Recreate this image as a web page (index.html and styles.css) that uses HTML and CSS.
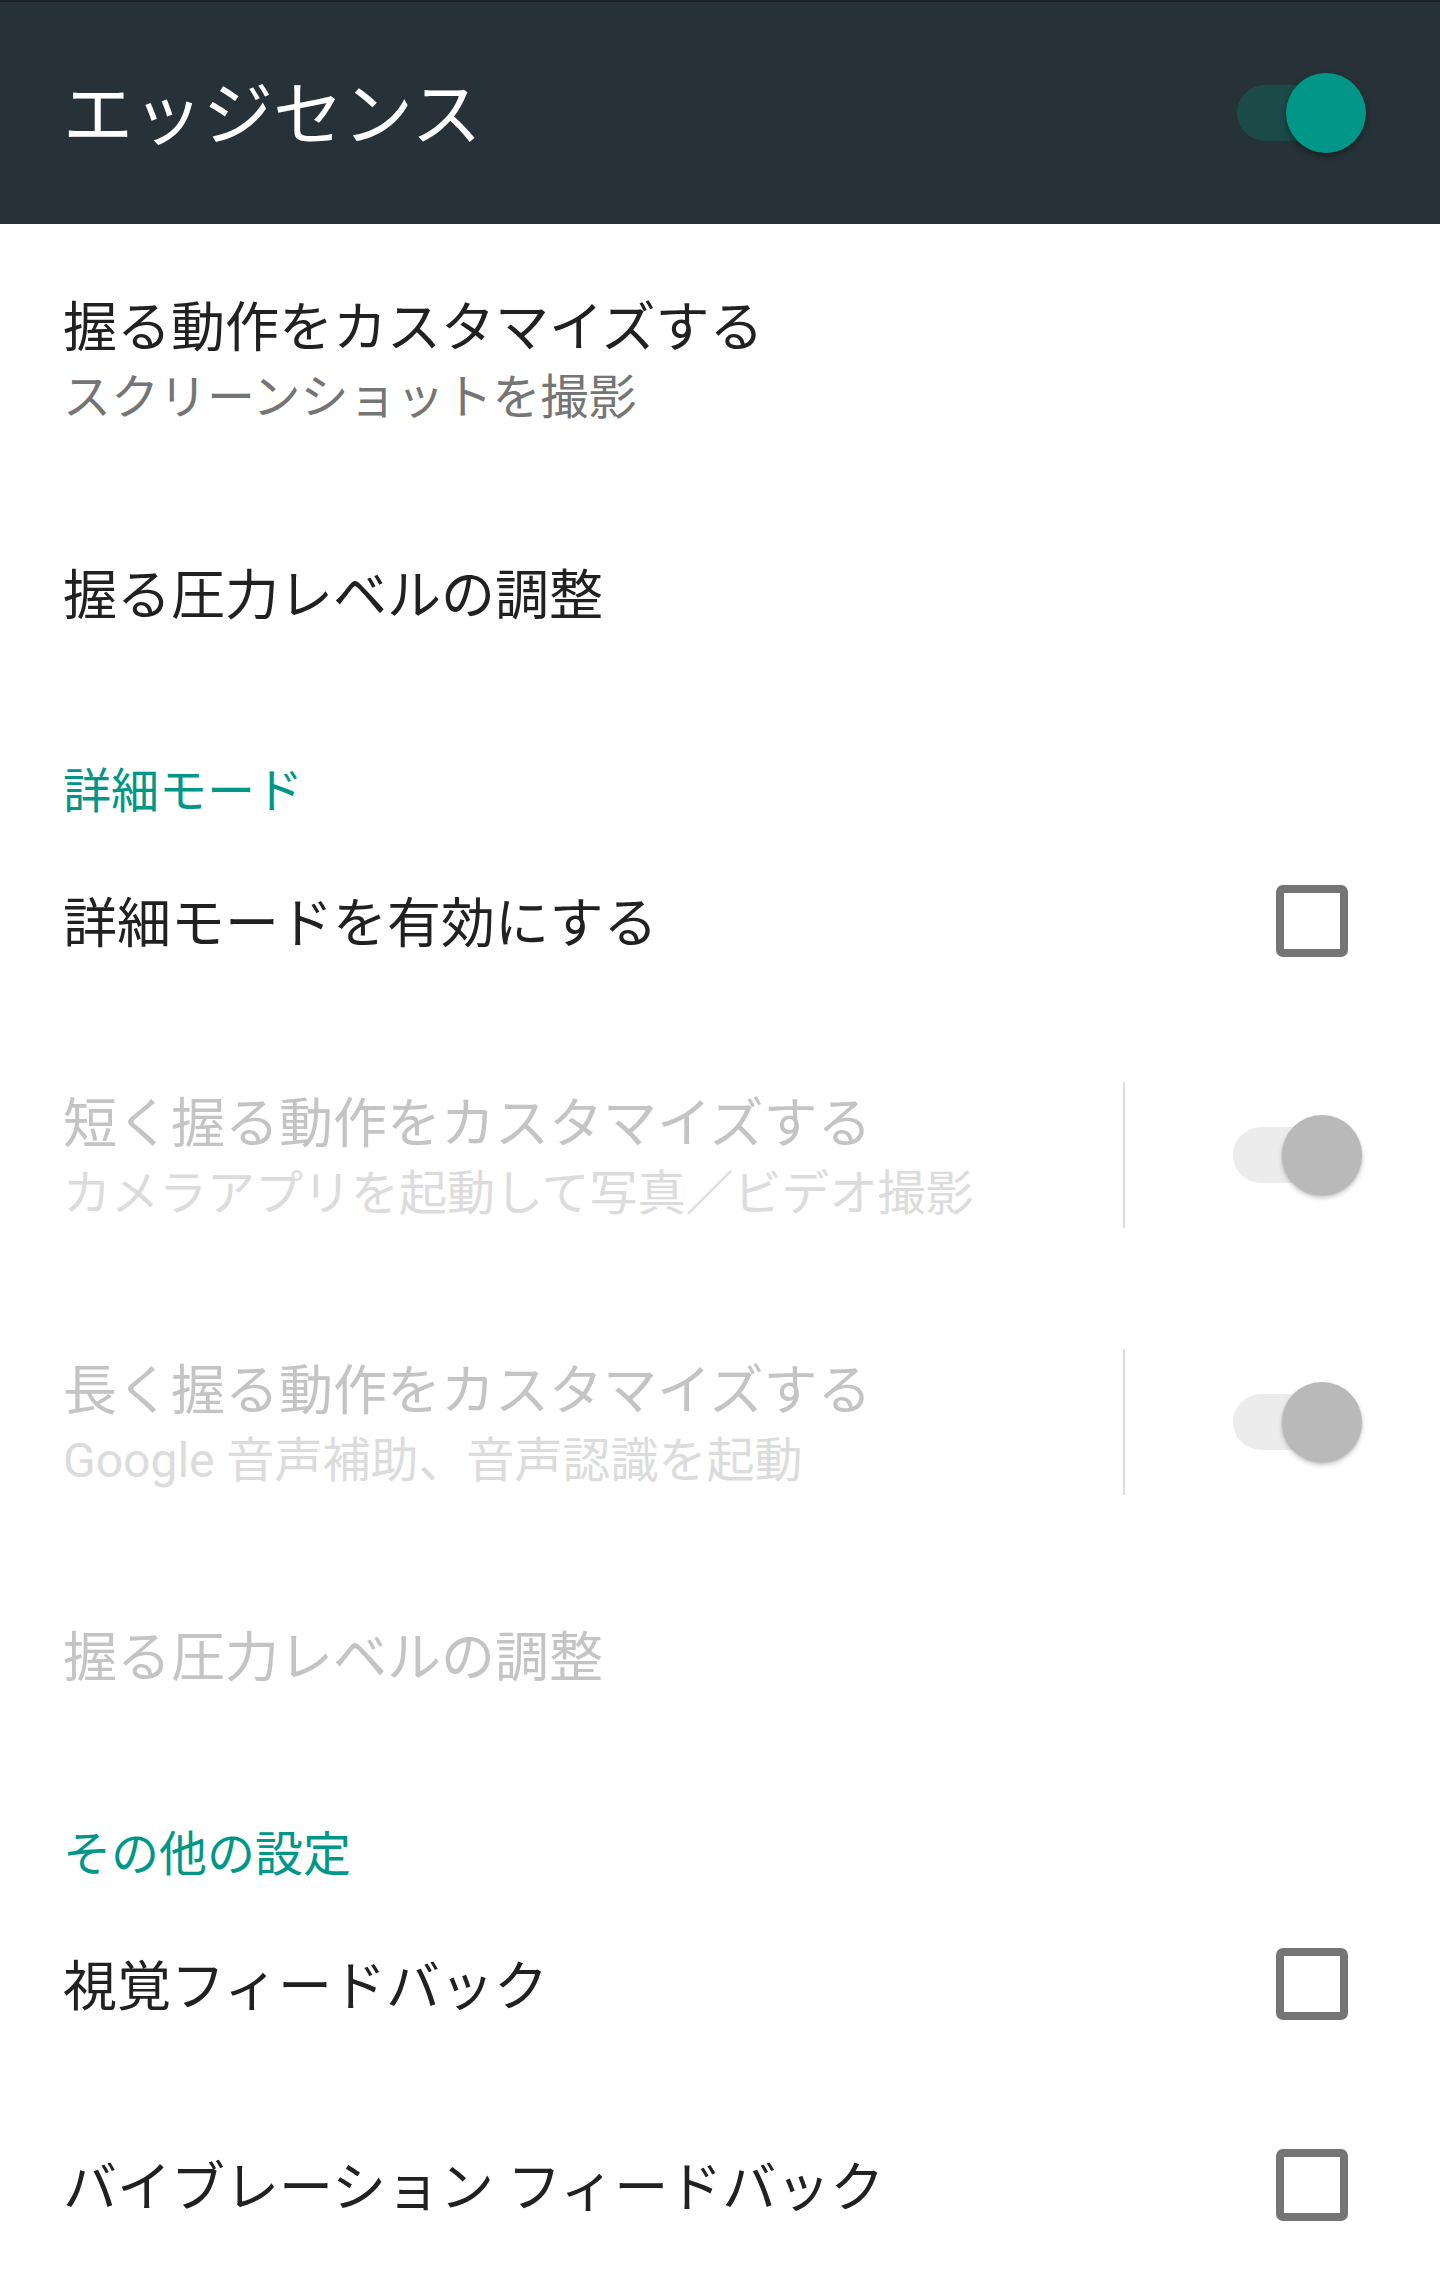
FILE: index.html
```html
<!DOCTYPE html>
<html lang="ja">
    <head>
        <meta charset="UTF-8">
        <meta name="viewport" content="width=device-width, initial-scale=1.0">
        <title>エッジセンス</title>
        <link rel="stylesheet" href="styles.css">
    </head>
<body>
    <header class="appbar">
        <h1 class="appbar-title">エッジセンス</h1>
        <span class="switch switch-on">
            <span class="switch-track"></span>
            <span class="switch-thumb"></span>
        </span>
    </header>

    <main class="prefs">
        <div class="pref pref-two">
            <div class="pref-text">
                <div class="pref-title">握る動作をカスタマイズする</div>
                <div class="pref-summary">スクリーンショットを撮影</div>
            </div>
        </div>

        <div class="pref">
            <div class="pref-text">
                <div class="pref-title">握る圧力レベルの調整</div>
            </div>
        </div>

        <div class="category">詳細モード</div>

        <div class="pref">
            <div class="pref-text">
                <div class="pref-title">詳細モードを有効にする</div>
            </div>
            <span class="checkbox"></span>
        </div>

        <div class="pref pref-two disabled">
            <div class="pref-text">
                <div class="pref-title">短く握る動作をカスタマイズする</div>
                <div class="pref-summary">カメラアプリを起動して写真／ビデオ撮影</div>
            </div>
            <span class="divider"></span>
            <span class="switch">
                <span class="switch-track"></span>
                <span class="switch-thumb"></span>
            </span>
        </div>

        <div class="pref pref-two disabled">
            <div class="pref-text">
                <div class="pref-title">長く握る動作をカスタマイズする</div>
                <div class="pref-summary">Google 音声補助、音声認識を起動</div>
            </div>
            <span class="divider"></span>
            <span class="switch">
                <span class="switch-track"></span>
                <span class="switch-thumb"></span>
            </span>
        </div>

        <div class="pref disabled">
            <div class="pref-text">
                <div class="pref-title">握る圧力レベルの調整</div>
            </div>
        </div>

        <div class="category category-low">その他の設定</div>

        <div class="pref">
            <div class="pref-text">
                <div class="pref-title">視覚フィードバック</div>
            </div>
            <span class="checkbox"></span>
        </div>

        <div class="pref">
            <div class="pref-text">
                <div class="pref-title">バイブレーション フィードバック</div>
            </div>
            <span class="checkbox"></span>
        </div>
    </main>
</body>
</html>
```

FILE: styles.css
```css
body {
    margin: 0;
    padding: 0;
    background-color: #ffffff;
    font-family: Roboto, 'Noto Sans CJK JP', sans-serif;
    overflow: hidden;
}

/* top bar */
.appbar {
    display: flex;
    align-items: center;
    justify-content: space-between;
    height: 222px;
    border-top: 2px solid #1c2023;
    background-color: #263238;
    padding: 0 74px 0 63px;
}

.appbar-title {
    margin: 0;
    padding-top: 6px;
    color: #ffffff;
    font-size: 70px;
    font-weight: normal;
    line-height: 80px;
}

/* switches */
.switch {
    display: flex;
    align-items: center;
}

.switch-track {
    width: 125px;
    height: 56px;
    border-radius: 28px;
    background-color: #ececec;
}

.switch-thumb {
    width: 80px;
    height: 80px;
    margin-left: -76px;
    border-radius: 50%;
    background-color: #b9b9b9;
    box-shadow: 0 3px 5px rgba(0, 0, 0, 0.22), 0 1px 2px rgba(0, 0, 0, 0.12);
}

.switch-on .switch-track {
    background-color: #1c4a48;
}

.switch-on .switch-thumb {
    background-color: #009688;
    box-shadow: 0 3px 6px rgba(0, 0, 0, 0.4);
}

/* preference list */
.pref {
    display: flex;
    align-items: center;
    height: 200px;
    padding: 0 78px 0 63px;
}

.pref-two {
    height: 267px;
}

.pref:first-child {
    height: 269px;
}

.pref:last-child {
    height: 201px;
}

.pref-text {
    flex: 1;
    padding-top: 8px;
}

.pref-two .pref-text {
    padding-top: 12px;
}

.pref-title {
    color: #212121;
    font-size: 54px;
    line-height: 66px;
}

.pref-summary {
    color: #757575;
    font-size: 48px;
    line-height: 72px;
}

.disabled .pref-title {
    color: #c4c4c4;
}

.disabled .pref-summary {
    color: #dcdcdc;
}

.divider {
    width: 2px;
    height: 146px;
    margin-right: 108px;
    background-color: #dddddd;
}

.checkbox {
    box-sizing: border-box;
    width: 72px;
    height: 72px;
    margin-right: 14px;
    border: 8px solid #757575;
    border-radius: 7px;
}

/* section headers */
.category {
    display: flex;
    align-items: flex-end;
    height: 128px;
    padding-left: 63px;
    color: #009688;
    font-size: 48px;
    line-height: 58px;
}

.category-low {
    height: 129px;
}
```
